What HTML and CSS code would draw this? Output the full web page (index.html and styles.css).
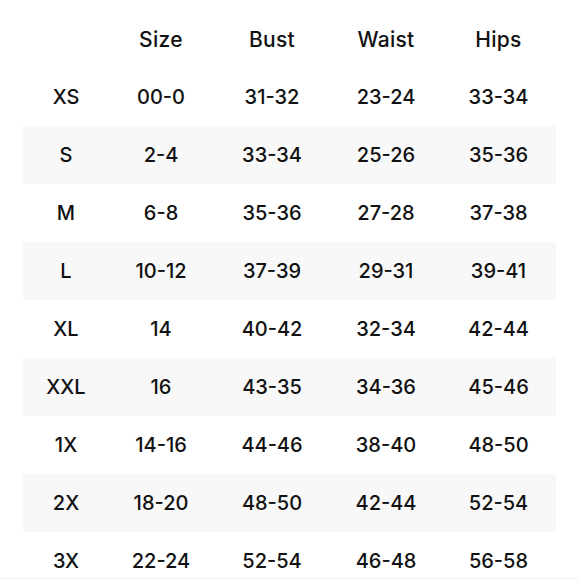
FILE: index.html
```html
<!DOCTYPE html>
<html>
<head>
<meta charset="utf-8">
<link rel="stylesheet" href="styles.css">
</head>
<body>
<div class="page">
<table class="chart">
<colgroup><col class="c1"><col class="c2"><col class="c3"><col class="c4"><col class="c5"></colgroup>
<thead><tr><th></th><th>Size</th><th>Bust</th><th>Waist</th><th>Hips</th></tr></thead>
<tbody>
<tr><td>XS</td><td>00-0</td><td>31-32</td><td>23-24</td><td>33-34</td></tr>
<tr><td>S</td><td>2-4</td><td>33-34</td><td>25-26</td><td>35-36</td></tr>
<tr><td>M</td><td>6-8</td><td>35-36</td><td>27-28</td><td>37-38</td></tr>
<tr><td>L</td><td>10-12</td><td>37-39</td><td>29-31</td><td>39-41</td></tr>
<tr><td>XL</td><td>14</td><td>40-42</td><td>32-34</td><td>42-44</td></tr>
<tr><td>XXL</td><td>16</td><td>43-35</td><td>34-36</td><td>45-46</td></tr>
<tr><td>1X</td><td>14-16</td><td>44-46</td><td>38-40</td><td>48-50</td></tr>
<tr><td>2X</td><td>18-20</td><td>48-50</td><td>42-44</td><td>52-54</td></tr>
<tr><td>3X</td><td>22-24</td><td>52-54</td><td>46-48</td><td>56-58</td></tr>
</tbody>
</table>
</div>
</body>
</html>
```
FILE: styles.css
```css
html, body { margin: 0; padding: 0; background: #fff; }
.page {
  box-sizing: border-box;
  height: 579px;
  overflow: hidden;
  padding: 10px 23px 0 23px;
  border-bottom: 1px solid #f0f0f0;
}
.chart {
  border-collapse: collapse;
  width: 533px;
  table-layout: fixed;
  font-family: Inter, "DejaVu Sans", sans-serif;
  font-size: 20px;
  font-weight: 500;
  color: #111;
}
.c1 { width: 86px; }
.c2 { width: 104px; }
.c3 { width: 118px; }
.c4 { width: 110px; }
.c5 { width: 115px; }
.chart th, .chart td {
  height: 58px;
  padding: 0;
  text-align: center;
  vertical-align: middle;
  font-weight: 500;
}
.chart th {
  font-size: 21px;
  letter-spacing: 0.3px;
}
.chart tbody tr:nth-child(even) { background: #f8f8f8; }
```
